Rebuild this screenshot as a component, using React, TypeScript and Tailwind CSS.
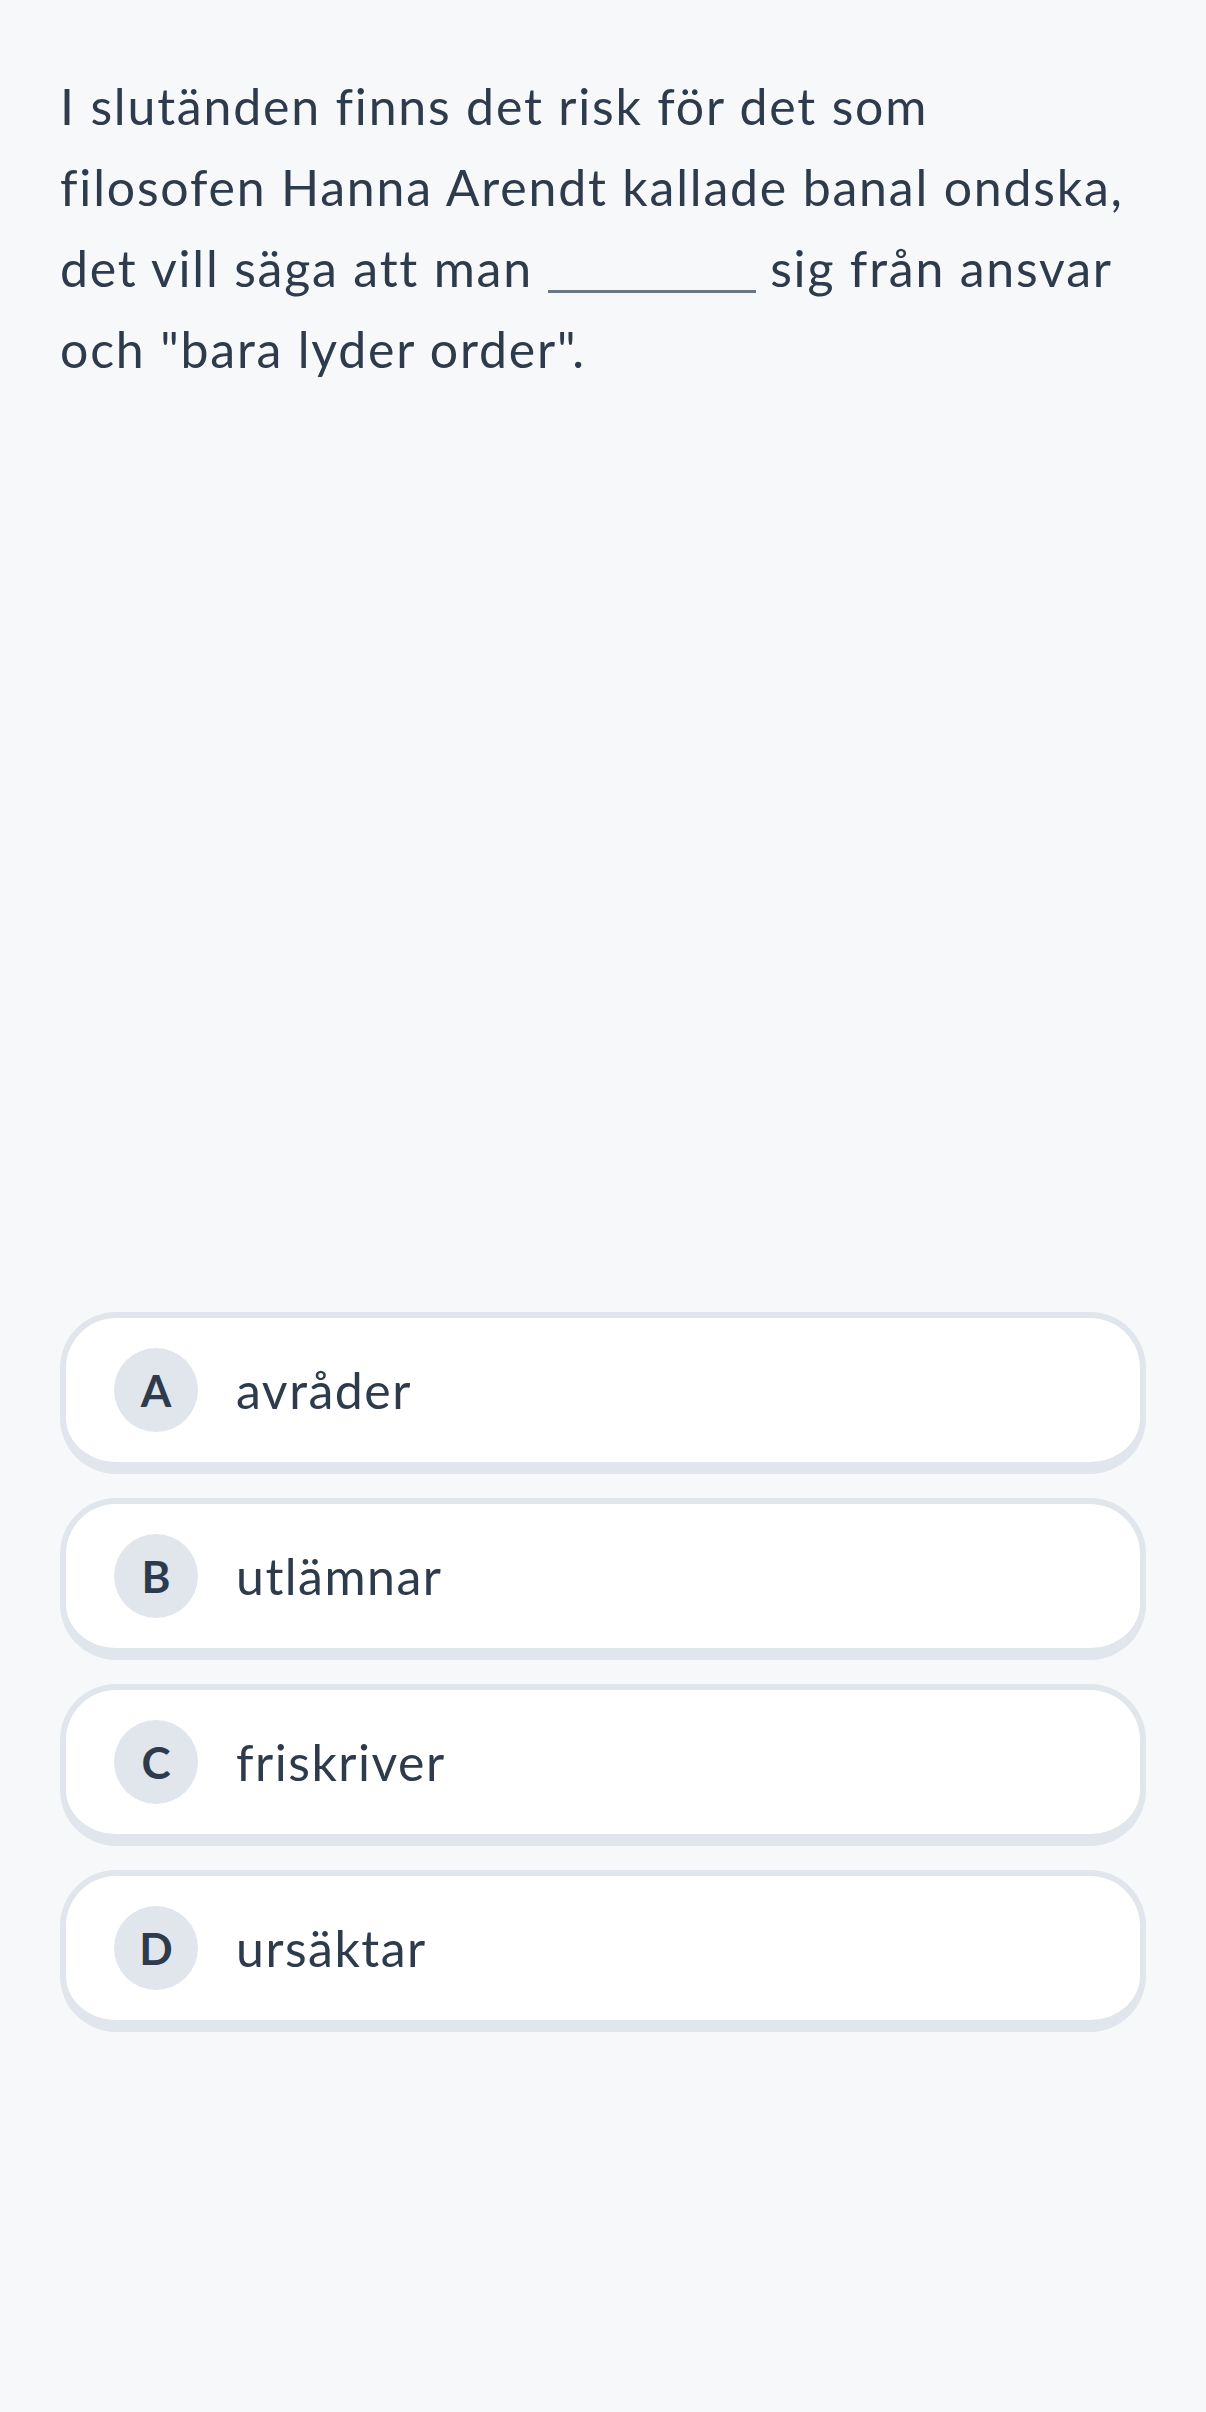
const options = [
  { key: 'A', label: 'avråder' },
  { key: 'B', label: 'utlämnar' },
  { key: 'C', label: 'friskriver' },
  { key: 'D', label: 'ursäktar' },
];

export default function App() {
  return (
    <div
      className="min-h-[2412px] bg-[#f7f8fa] px-[60px] text-[#2d3b4d] [font-variant-ligatures:none]"
      style={{ fontFamily: 'Lato, "Noto Sans", sans-serif' }}
    >
      {/* Question */}
      <p className="pt-[66px] text-[50px] leading-[81px] tracking-[1.8px]">
        I slutänden finns det risk för det som
        <br />
        filosofen Hanna Arendt kallade banal ondska,
        <br />
        det vill säga att man{' '}
        <span className="inline-block w-[208px] border-b-[3px] border-[#6b7685] align-[-6px]" /> sig från ansvar
        <br />
        och "bara lyder order".
      </p>

      {/* Options */}
      <div className="mt-[922px] flex flex-col gap-[24px]">
        {options.map((o) => (
          <button
            key={o.key}
            className="flex items-center gap-[38px] rounded-[56px] border-[6px] border-b-[12px] border-[#e1e6ec] bg-white px-[48px] py-[30px] text-left"
          >
            <span className="flex h-[84px] w-[84px] items-center justify-center rounded-full bg-[#e1e6ed] text-[44px] font-bold">
              {o.key}
            </span>
            <span className="text-[50px] tracking-[1.5px]">{o.label}</span>
          </button>
        ))}
      </div>
    </div>
  );
}
